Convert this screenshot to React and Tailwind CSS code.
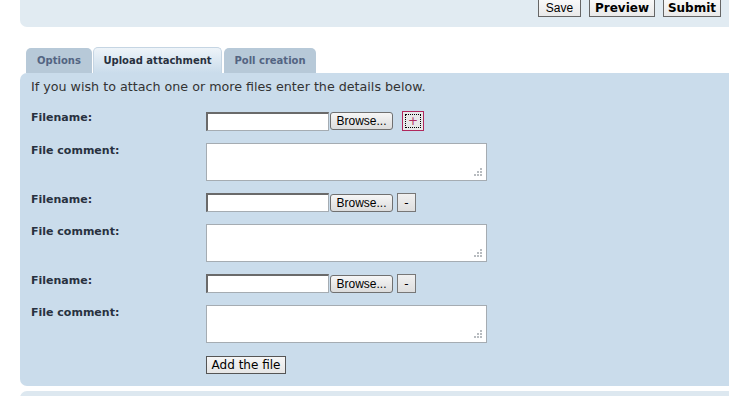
import React from "react";

function ResizeGrip() {
  return (
    <svg className="absolute right-[3px] bottom-[3px]" width="9" height="9" viewBox="0 0 9 9">
      <rect x="6" y="0" width="2" height="2" fill="#b8bcc0" />
      <rect x="3" y="3" width="2" height="2" fill="#b8bcc0" />
      <rect x="6" y="3" width="2" height="2" fill="#b8bcc0" />
      <rect x="0" y="6" width="2" height="2" fill="#b8bcc0" />
      <rect x="3" y="6" width="2" height="2" fill="#b8bcc0" />
      <rect x="6" y="6" width="2" height="2" fill="#b8bcc0" />
    </svg>
  );
}

function FileRow({ first }) {
  return (
    <>
      <div className="flex">
        <div className="w-[175px] text-[11px] leading-[14px] font-bold text-[#28313f]">Filename:</div>
        <div className="flex items-center">
          <div className="w-[123px] h-[19px] bg-white border border-[#a5acb2] border-t-[#6a6a6a] border-l-[#6a6a6a] border-t-2 border-l-2" />
          <button className="ml-[1px] w-[63px] h-[18px] rounded-[3px] border border-[#707070] bg-gradient-to-b from-[#f6f6f6] to-[#dcdcdc] text-[12px] leading-none text-black font-['Liberation_Sans',Arial,sans-serif]">
            Browse...
          </button>
          {first ? (
            <button className="ml-[9px] w-[22px] h-[20px] border border-[#b0285c] bg-[#e8e8e8] p-[2px]">
              <span className="flex h-full w-full items-center justify-center border border-dotted border-black text-[12px] leading-none text-[#b0285c]">
                +
              </span>
            </button>
          ) : (
            <button className="ml-[4px] w-[19px] h-[19px] border border-[#777] bg-gradient-to-b from-[#f0f0f0] to-[#dedede] text-[12px] leading-none text-black">
              -
            </button>
          )}
        </div>
      </div>
      <div className="flex mt-[12px]">
        <div className="w-[175px] pt-[1px] text-[11px] leading-[14px] font-bold text-[#28313f]">File comment:</div>
        <div className="relative w-[281px] h-[38px] bg-white border border-[#a5acb2]">
          <ResizeGrip />
        </div>
      </div>
    </>
  );
}

export default function App() {
  return (
    <div className="w-[729px] h-[396px] overflow-hidden bg-white font-['DejaVu_Sans',Verdana,sans-serif]">
      <div className="ml-[20px] h-[27px] bg-[#e1ebf2] rounded-bl-[7px] flex justify-end items-start gap-[8px] pr-[8px]">
        <button className="-mt-[2px] h-[19px] w-[43px] border border-[#666] bg-gradient-to-b from-[#fafafa] to-[#e9e9e9] text-[12px] leading-none text-black font-['Liberation_Sans',Arial,sans-serif] pt-[1px]">
          Save
        </button>
        <button className="-mt-[2px] h-[19px] w-[66px] border border-[#666] bg-gradient-to-b from-[#fafafa] to-[#e9e9e9] text-[12px] leading-none font-bold text-black pt-[1px]">
          Preview
        </button>
        <button className="-mt-[2px] h-[19px] w-[58px] border border-[#666] bg-gradient-to-b from-[#fafafa] to-[#e9e9e9] text-[12px] leading-none font-bold text-black pt-[1px]">
          Submit
        </button>
      </div>

      <div className="mt-[20px] ml-[26px] flex items-end gap-[1px] h-[26px]">
        <div className="w-[66px] h-[25px] rounded-t-[5px] bg-[#b7c9d8] text-[#536482] text-[10px] font-bold flex items-center justify-center">
          Options
        </div>
        <div className="w-[129px] h-[26px] rounded-t-[5px] bg-gradient-to-b from-[#eef4f9] to-[#cadceb] border border-b-0 border-[#c5d5e3] text-[#28313f] text-[10px] font-bold flex items-center justify-center">
          Upload attachment
        </div>
        <div className="ml-[1px] w-[92px] h-[25px] rounded-t-[5px] bg-[#b7c9d8] text-[#536482] text-[10px] font-bold flex items-center justify-center">
          Poll creation
        </div>
      </div>

      <div className="ml-[20px] h-[313px] bg-[#cadceb] rounded-l-[7px] pl-[11px] pt-[6px]">
        <p className="text-[12.7px] leading-[16px] text-[#333]">
          If you wish to attach one or more files enter the details below.
        </p>
        <div className="mt-[16px] flex flex-col">
          <FileRow first />
          <div className="mt-[12px] flex flex-col">
            <FileRow />
          </div>
          <div className="mt-[12px] flex flex-col">
            <FileRow />
          </div>
          <div className="flex mt-[13px]">
            <div className="w-[175px]" />
            <button className="w-[80px] h-[18px] border border-[#555] bg-gradient-to-b from-[#f6f6f6] to-[#e6e6e6] text-[12px] leading-none text-black">
              Add the file
            </button>
          </div>
        </div>
      </div>

      <div className="mt-[5px] ml-[20px] h-[20px] bg-[#dde8f0] rounded-tl-[7px]" />
    </div>
  );
}
